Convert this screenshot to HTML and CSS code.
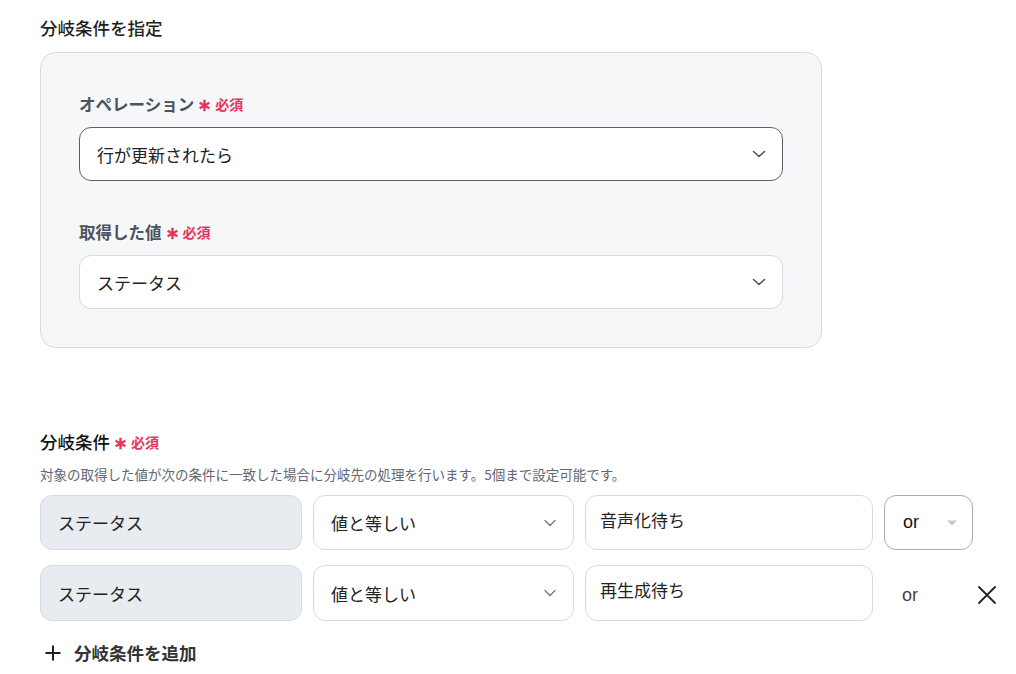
FILE: index.html
```html
<!DOCTYPE html>
<html lang="ja">
<head>
    <meta charset="utf-8">
    <title>分岐条件を指定</title>
    <link rel="stylesheet" href="styles.css">
</head>
<body>
    <div class="page">
        <h2 class="section-title">分岐条件を指定</h2>

        <div class="panel">
            <div class="field">
                <label class="field-label">オペレーション<span class="req"><svg class="ast" width="13" height="13" viewBox="0 0 12 12"><path d="M6 0.8v10.4M1.5 3.4l9 5.2M10.5 3.4l-9 5.2" stroke="#e8345a" stroke-width="2.2"/></svg>必須</span></label>
                <div class="select select-active">
                    <span>行が更新されたら</span>
                    <svg class="chev" width="16" height="16" viewBox="0 0 16 16"><path d="M2.5 5.5 8 10.5l5.5-5" fill="none" stroke="#555" stroke-width="1.6" stroke-linecap="round" stroke-linejoin="round"/></svg>
                </div>
            </div>
            <div class="field">
                <label class="field-label">取得した値<span class="req"><svg class="ast" width="13" height="13" viewBox="0 0 12 12"><path d="M6 0.8v10.4M1.5 3.4l9 5.2M10.5 3.4l-9 5.2" stroke="#e8345a" stroke-width="2.2"/></svg>必須</span></label>
                <div class="select">
                    <span>ステータス</span>
                    <svg class="chev" width="16" height="16" viewBox="0 0 16 16"><path d="M2.5 5.5 8 10.5l5.5-5" fill="none" stroke="#555" stroke-width="1.6" stroke-linecap="round" stroke-linejoin="round"/></svg>
                </div>
            </div>
        </div>

        <div class="conditions">
            <div class="cond-label">分岐条件<span class="req"><svg class="ast" width="13" height="13" viewBox="0 0 12 12"><path d="M6 0.8v10.4M1.5 3.4l9 5.2M10.5 3.4l-9 5.2" stroke="#e8345a" stroke-width="2.2"/></svg>必須</span></div>
            <p class="cond-desc">対象の取得した値が次の条件に一致した場合に分岐先の処理を行います。5個まで設定可能です。</p>

            <div class="cond-row">
                <div class="box box-fixed">ステータス</div>
                <div class="box box-select">
                    <span>値と等しい</span>
                    <svg class="chev-sm" width="14" height="14" viewBox="0 0 14 14"><path d="M2 4.5 7 9.5l5-5" fill="none" stroke="#777" stroke-width="1.3" stroke-linecap="round" stroke-linejoin="round"/></svg>
                </div>
                <div class="box box-input">音声化待ち</div>
                <div class="box box-or">
                    <span>or</span>
                    <svg width="12" height="8" viewBox="0 0 12 8"><path d="M1 1.5h10L6 6.5z" fill="#c8c8c8"/></svg>
                </div>
                <div></div>
            </div>

            <div class="cond-row">
                <div class="box box-fixed">ステータス</div>
                <div class="box box-select">
                    <span>値と等しい</span>
                    <svg class="chev-sm" width="14" height="14" viewBox="0 0 14 14"><path d="M2 4.5 7 9.5l5-5" fill="none" stroke="#777" stroke-width="1.3" stroke-linecap="round" stroke-linejoin="round"/></svg>
                </div>
                <div class="box box-input">再生成待ち</div>
                <div class="or-text">or</div>
                <button class="remove" type="button">
                    <svg width="20" height="20" viewBox="0 0 20 20"><path d="M2 2l16 16M18 2 2 18" stroke="#222" stroke-width="1.8" stroke-linecap="round"/></svg>
                </button>
            </div>

            <button class="add-btn" type="button">
                <svg width="18" height="18" viewBox="0 0 18 18"><path d="M9 1.5v15M1.5 9h15" stroke="#222" stroke-width="2"/></svg>
                分岐条件を追加
            </button>
        </div>
    </div>
</body>
</html>
```

FILE: styles.css
```css
body {
    margin: 0;
    padding: 0;
    background-color: #fff;
    color: #222;
    font-family: "Noto Sans CJK JP", "Noto Sans", sans-serif;
}
.page {
    padding: 16px 0 0 40px;
}
.section-title {
    margin: 0;
    font-size: 17.5px;
    font-weight: 500;
    line-height: 24px;
    color: #1f1f1f;
}
.panel {
    box-sizing: border-box;
    width: 782px;
    margin-top: 12px;
    padding: 39px 38px 38px 38px;
    background-color: #f6f7f9;
    border: 1px solid #d6dae1;
    border-radius: 16px;
}
.field + .field {
    margin-top: 39px;
}
.field-label {
    display: flex;
    align-items: center;
    height: 24px;
    font-size: 16.5px;
    font-weight: 700;
    line-height: 24px;
    color: #4b5260;
}
.req {
    display: inline-flex;
    align-items: center;
    margin-left: 4px;
    font-size: 14px;
    font-weight: 700;
    color: #e8345a;
}
.ast {
    margin: 3px 4px 0 0;
}
.select {
    box-sizing: border-box;
    display: flex;
    align-items: center;
    justify-content: space-between;
    height: 54px;
    margin-top: 11px;
    padding: 0 15px 0 17px;
    background-color: #fff;
    border: 1px solid #d6dae1;
    border-radius: 12px;
    font-size: 17px;
    color: #222;
}
.select-active {
    border-color: #5a5f68;
}
.conditions {
    margin-top: 82px;
}
.cond-label {
    display: flex;
    align-items: center;
    height: 24px;
    font-size: 17.5px;
    font-weight: 500;
    line-height: 24px;
    color: #111;
}
.cond-desc {
    margin: 10px 0 11px;
    font-size: 13.5px;
    line-height: 20px;
    color: #616773;
}
.cond-row {
    display: grid;
    grid-template-columns: 262px 261px 288px 89px 40px;
    column-gap: 11px;
    height: 55px;
}
.cond-row + .cond-row {
    margin-top: 15px;
}
.box {
    box-sizing: border-box;
    display: flex;
    align-items: center;
    border: 1px solid #d6dae1;
    border-radius: 12px;
    font-size: 17px;
    color: #222;
}
.box-fixed {
    padding-left: 17px;
    background-color: #e8ebf0;
}
.box-select {
    justify-content: space-between;
    padding: 0 16px 0 17px;
    background-color: #fff;
}
.box-input {
    align-items: flex-start;
    padding: 11px 0 0 14px;
    background-color: #fff;
}
.cond-row + .cond-row .box-input {
    height: 56px;
}
.box-or {
    justify-content: space-between;
    padding: 0 14px 0 18px;
    border-color: #a8adb5;
    font-family: "Liberation Sans", Arial, sans-serif;
    font-size: 18px;
    color: #111;
}
.or-text {
    display: flex;
    align-items: center;
    padding: 4px 0 0 18px;
    font-family: "Liberation Sans", Arial, sans-serif;
    font-size: 18px;
    color: #444;
}
.remove {
    display: flex;
    align-items: center;
    justify-content: flex-start;
    padding: 4px 0 0 0;
    margin: 0 0 0 -7px;
    background: none;
    border: none;
}
.add-btn {
    display: flex;
    align-items: center;
    gap: 12px;
    margin-top: 21px;
    padding: 0 0 0 4px;
    background: none;
    border: none;
    font-family: "Noto Sans CJK JP", "Noto Sans", sans-serif;
    font-size: 17.5px;
    font-weight: 700;
    line-height: 24px;
    color: #333;
}
```
